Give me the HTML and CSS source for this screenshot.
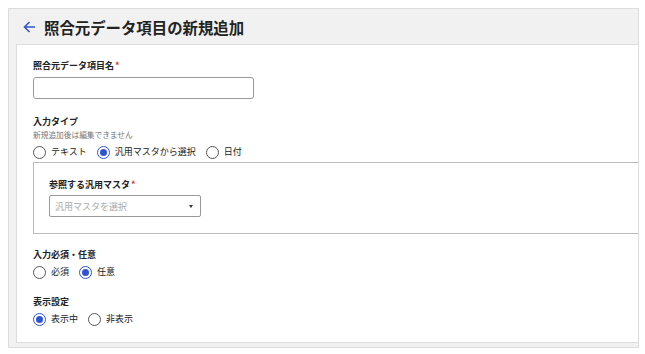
FILE: index.html
```html
<!DOCTYPE html>
<html lang="ja">
<head>
    <meta charset="UTF-8">
    <meta name="viewport" content="width=device-width, initial-scale=1.0">
    <title>照合元データ項目の新規追加</title>
    <link rel="stylesheet" href="styles.css">
</head>
<body>
    <div class="frame">
        <div class="page-header">
            <svg class="back" width="13" height="12" viewBox="0 0 13 12">
                <path d="M12 6H1.5M6.5 1L1.5 6l5 5" fill="none" stroke="#3556c8" stroke-width="1.6"/>
            </svg>
            <h1>照合元データ項目の新規追加</h1>
        </div>
        <div class="card">
            <div class="field first">
                <label class="label">照合元データ項目名<span class="req">*</span></label>
                <input type="text" class="text-input">
            </div>

            <div class="field type-field">
                <div class="label">入力タイプ</div>
                <div class="hint">新規追加後は編集できません</div>
                <div class="radios">
                    <label class="radio"><input type="radio" name="type"><span>テキスト</span></label>
                    <label class="radio"><input type="radio" name="type" checked><span>汎用マスタから選択</span></label>
                    <label class="radio"><input type="radio" name="type"><span>日付</span></label>
                </div>
                <div class="sub-panel">
                    <div class="label">参照する汎用マスタ<span class="req">*</span></div>
                    <div class="select">
                        <span class="placeholder">汎用マスタを選択</span>
                        <span class="caret"></span>
                    </div>
                </div>
            </div>

            <div class="field after-panel">
                <div class="label">入力必須・任意</div>
                <div class="radios">
                    <label class="radio"><input type="radio" name="required"><span>必須</span></label>
                    <label class="radio"><input type="radio" name="required" checked><span>任意</span></label>
                </div>
            </div>

            <div class="field">
                <div class="label">表示設定</div>
                <div class="radios">
                    <label class="radio"><input type="radio" name="display" checked><span>表示中</span></label>
                    <label class="radio"><input type="radio" name="display"><span>非表示</span></label>
                </div>
            </div>
        </div>
    </div>
</body>
</html>
```

FILE: styles.css
```css
body {
    margin: 0;
    background: #ffffff;
    font-family: "Noto Sans CJK JP", "Noto Sans", sans-serif;
    color: #222222;
}

.frame {
    margin: 8px;
    width: 629px;
    height: 338px;
    border: 1px solid #dddddd;
    background: #f1f1f1;
    overflow: hidden;
    display: flex;
    flex-direction: column;
}

.page-header {
    display: flex;
    align-items: center;
    height: 35px;
    padding-left: 14px;
    flex-shrink: 0;
}

.back {
    margin-right: 8px;
}

h1 {
    margin: 0;
    font-size: 15.4px;
    font-weight: bold;
    line-height: 20px;
    color: #222222;
}

.card {
    margin: 0 0 4px 7px;
    width: 800px;
    flex: 1;
    background: #ffffff;
    border: 1px solid #dddddd;
    padding: 0 0 0 16px;
    box-sizing: border-box;
}

.field {
    display: flex;
    flex-direction: column;
    align-items: flex-start;
    margin-top: 17px;
}

.field.first {
    margin-top: 15px;
}

.field.type-field {
    margin-top: 17px;
}

.field.after-panel {
    margin-top: 15px;
}

.label {
    font-size: 9px;
    font-weight: bold;
    line-height: 12px;
    color: #222222;
}

.req {
    color: #d0333a;
    margin-left: 1px;
}

.hint {
    font-size: 7.7px;
    line-height: 11px;
    color: #777777;
    margin-top: 1px;
}

.text-input {
    margin-top: 5px;
    width: 221px;
    height: 22px;
    box-sizing: border-box;
    border: 1px solid #999999;
    border-radius: 3px;
    padding: 0 6px;
}

.radios {
    display: flex;
    align-items: center;
    height: 14px;
    margin-top: 4px;
}

.hint + .radios {
    margin-top: 5px;
}

.radio {
    display: flex;
    align-items: center;
    margin-right: 10px;
    font-size: 9px;
    line-height: 12px;
    color: #222222;
}

.radio input {
    appearance: none;
    -webkit-appearance: none;
    margin: 0 5px 0 0;
    width: 13px;
    height: 13px;
    border: 1.3px solid #555555;
    border-radius: 50%;
    box-sizing: border-box;
    display: grid;
    place-content: center;
    background: #ffffff;
}

.radio input:checked {
    border-color: #2f54cf;
}

.radio input:checked::before {
    content: "";
    width: 7px;
    height: 7px;
    border-radius: 50%;
    background: #2f54cf;
}

.sub-panel {
    margin-top: 3px;
    align-self: stretch;
    border: 1px solid #bbbbbb;
    padding: 16px 15px 16px 15px;
    display: flex;
    flex-direction: column;
    align-items: flex-start;
}

.select {
    margin-top: 4px;
    width: 152px;
    height: 22px;
    box-sizing: border-box;
    border: 1px solid #999999;
    border-radius: 2px;
    display: flex;
    align-items: center;
    justify-content: space-between;
    padding: 0 7px 0 5px;
}

.placeholder {
    font-size: 9px;
    color: #aaaaaa;
}

.caret {
    width: 0;
    height: 0;
    border-left: 2.5px solid transparent;
    border-right: 2.5px solid transparent;
    border-top: 3px solid #333333;
}
```
